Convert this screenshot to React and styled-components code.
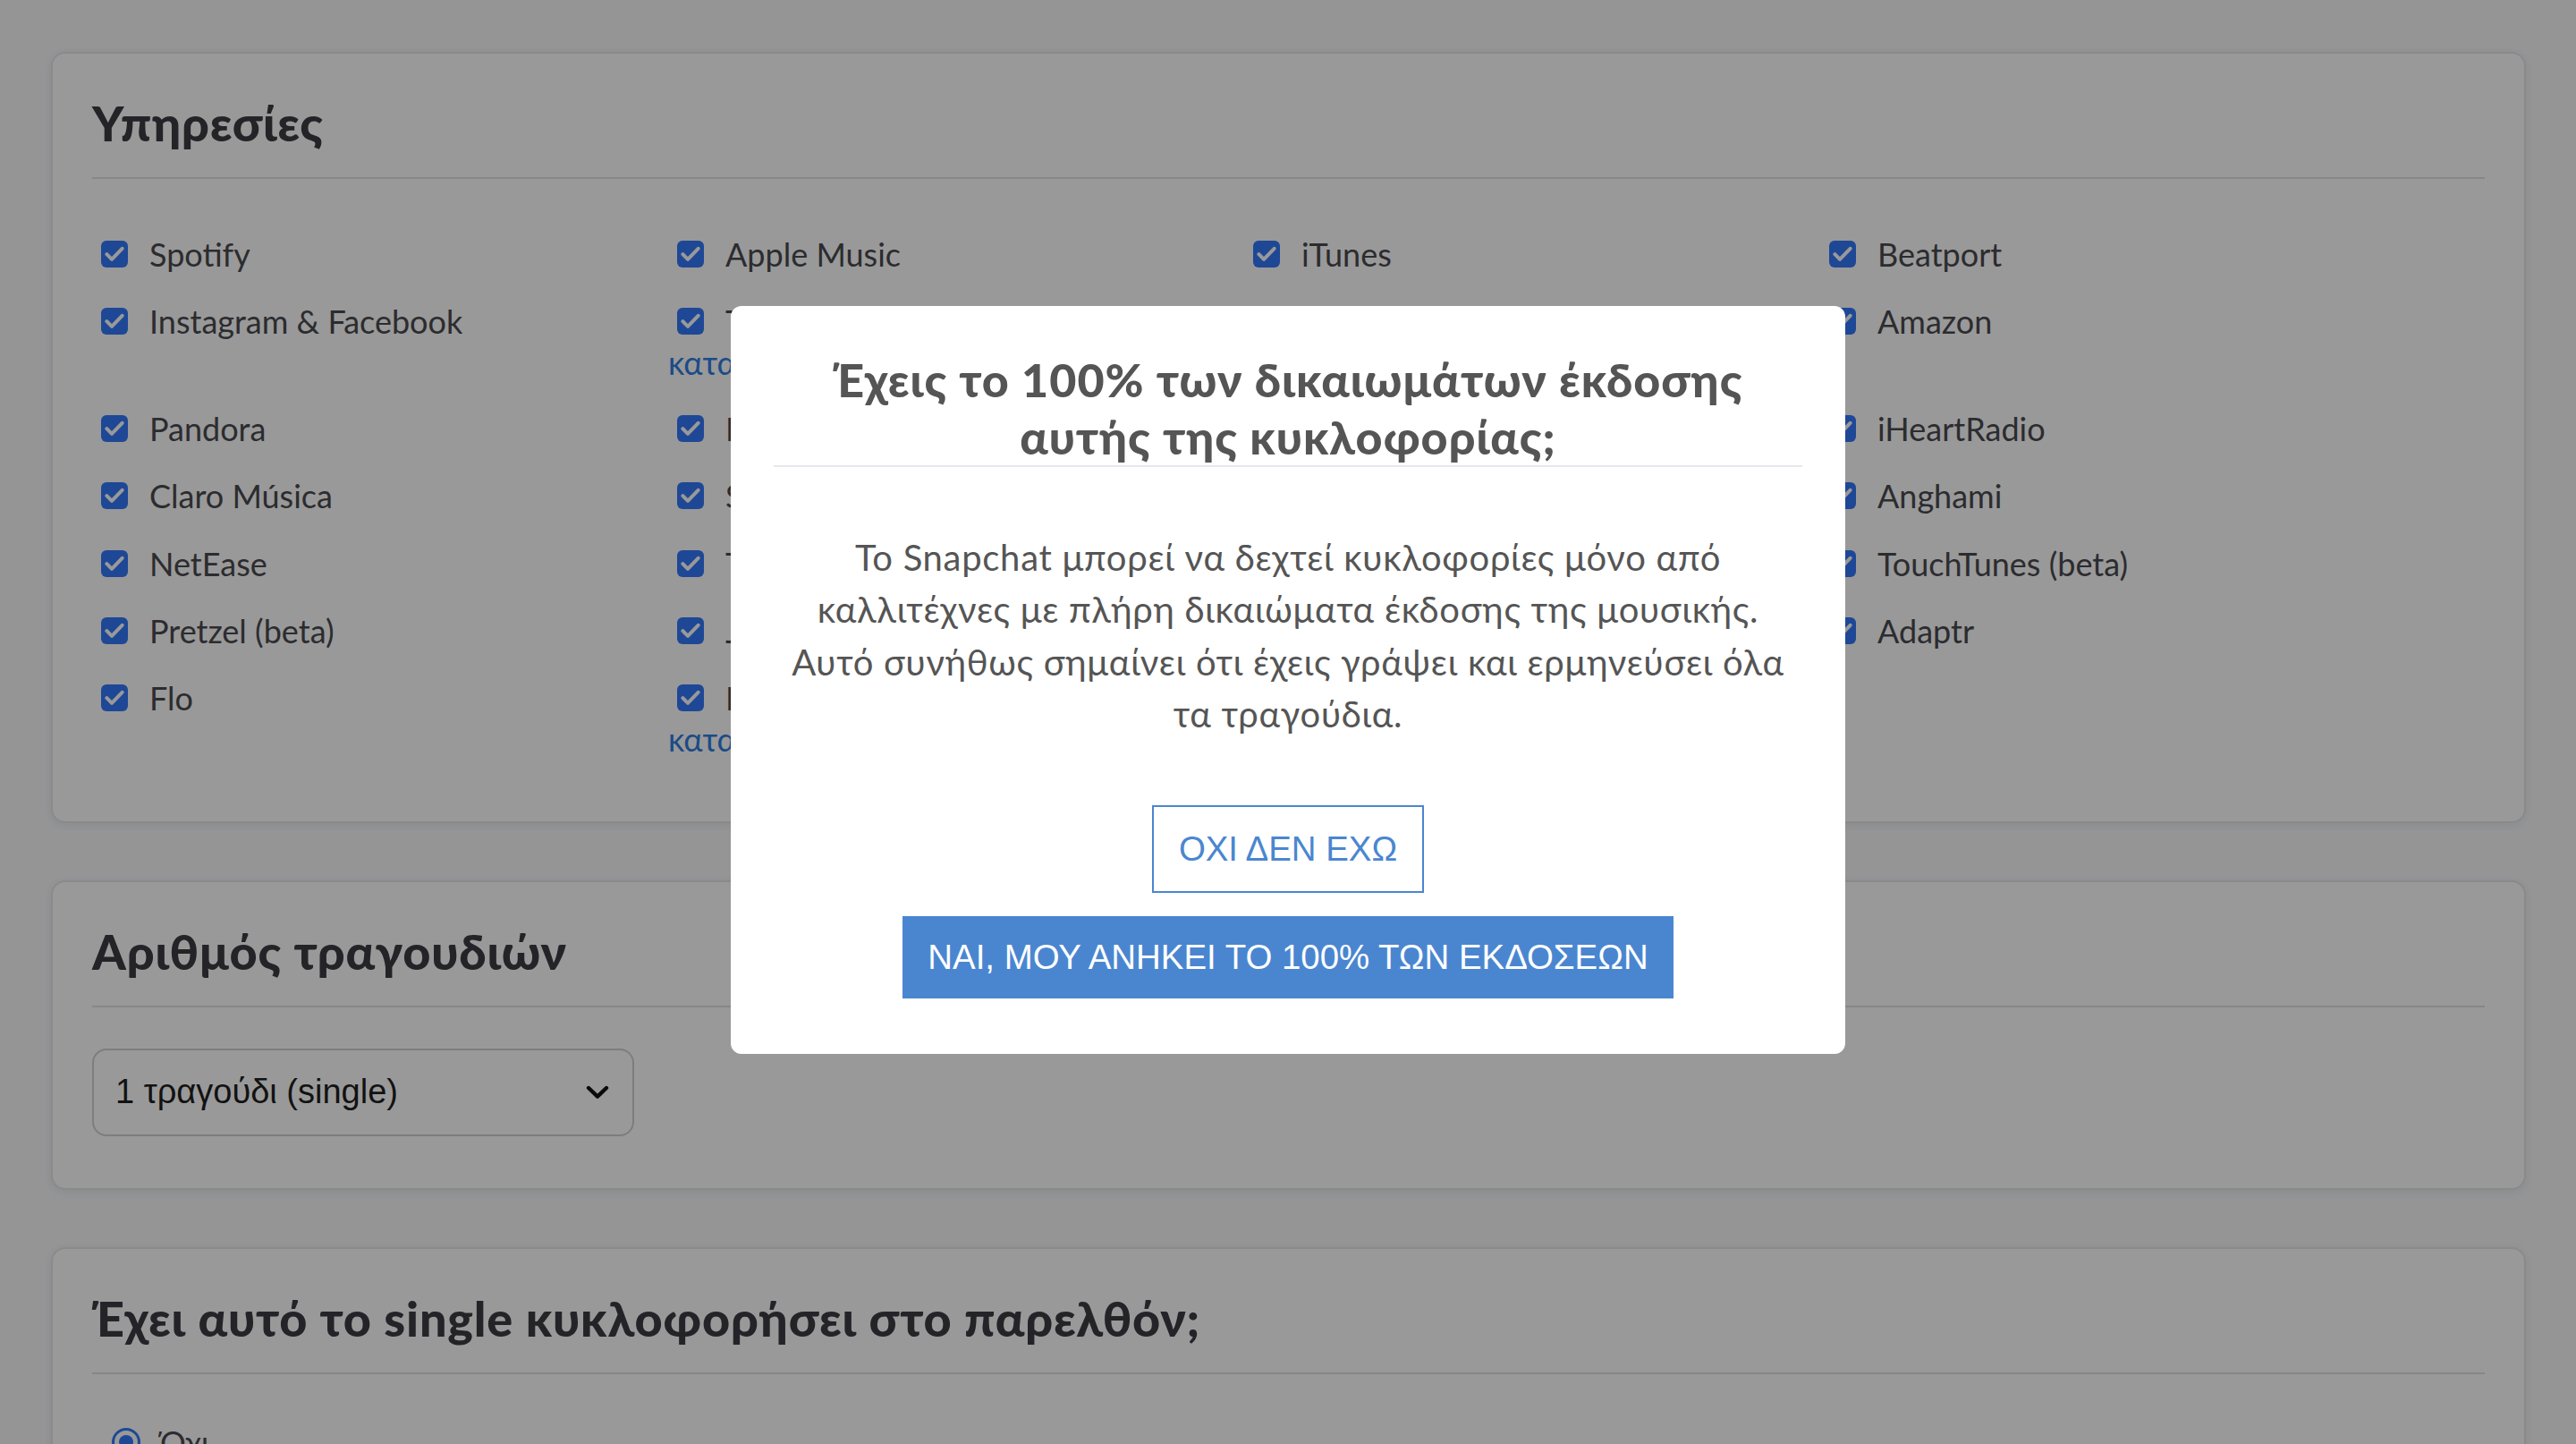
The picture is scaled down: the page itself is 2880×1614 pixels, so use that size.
import React from 'react'
import styled, { createGlobalStyle } from 'styled-components'

const GlobalStyle = createGlobalStyle`
  html {
    zoom: 2;
  }
  body {
    margin: 0;
    background: #f8f9fb;
    font-family: 'Lato', 'Noto Sans', sans-serif;
  }
`

const Page = styled.main`
  display: flex;
  flex-direction: column;
  gap: 32px;
  padding: 29px 28px 60px 28.5px;
`

const Card = styled.section`
  background: #ffffff;
  border: 1px solid #e6e6e6;
  border-radius: 8px;
  box-shadow: 0 1px 6px rgba(0, 0, 0, 0.08);
  padding: 23px 22px 21px;
`

const Heading = styled.h2`
  margin: 0 0 14px;
  font-family: 'Lato', 'Noto Sans', sans-serif;
  font-weight: 900;
  font-size: 27px;
  line-height: 32px;
  letter-spacing: 0.4px;
  color: #3c3c44;
`

const Divider = styled.hr`
  margin: 0;
  border: 0;
  border-top: 1px solid #e1e1e1;
`

const ServiceGrid = styled.div`
  display: grid;
  grid-template-columns: repeat(4, 322px);
  margin-top: 30px;
`

const ServiceItem = styled.div`
  padding-bottom: 13.7px;
`

const CheckRow = styled.label`
  display: flex;
  align-items: center;
  height: 24px;
`

const Box = styled.span`
  display: flex;
  align-items: center;
  justify-content: center;
  flex: none;
  width: 15px;
  height: 15px;
  margin: 0 12px 0 5px;
  border-radius: 3px;
  background: #3279fb;
`

const Label = styled.span`
  font-size: 18px;
  line-height: 24px;
  color: #4a4a4f;
  white-space: nowrap;
`

const Extra = styled.a`
  display: block;
  font-size: 18px;
  line-height: 22px;
  color: #2f7de1;
  text-decoration: none;
  white-space: nowrap;
`

const SelectBox = styled.div`
  display: flex;
  align-items: center;
  justify-content: space-between;
  box-sizing: border-box;
  width: 303px;
  height: 49px;
  margin: 23px 0 8px;
  padding: 0 13px 0 12px;
  border: 1px solid #d0d0d0;
  border-radius: 8px;
  background: #ffffff;
  font-family: 'Liberation Sans', Arial, sans-serif;
  font-size: 19px;
  color: #1f1f1f;
`

const RadioRow = styled.label`
  display: flex;
  align-items: center;
  height: 24px;
  margin-top: 26px;
`

const Radio = styled.span`
  display: flex;
  align-items: center;
  justify-content: center;
  box-sizing: border-box;
  width: 16px;
  height: 16px;
  margin: 0 11px 0 11px;
  border: 1.5px solid #3279fb;
  border-radius: 50%;

  &::after {
    content: '';
    width: 8px;
    height: 8px;
    border-radius: 50%;
    background: #3279fb;
  }
`

const Overlay = styled.div`
  position: fixed;
  inset: 0;
  display: flex;
  justify-content: center;
  align-items: flex-start;
  padding-top: 171px;
  background: rgba(0, 0, 0, 0.4);
`

const Dialog = styled.div`
  display: flex;
  flex-direction: column;
  align-items: center;
  box-sizing: border-box;
  width: 623px;
  padding: 25px 24px 31px;
  border-radius: 6px;
  background: #ffffff;
`

const DialogTitle = styled.h3`
  width: 100%;
  margin: 0;
  border-bottom: 1px solid #e6e6ec;
  font-weight: 900;
  font-size: 26px;
  line-height: 32px;
  letter-spacing: 0.5px;
  text-align: center;
  color: #555555;
`

const DialogText = styled.p`
  margin: 36px 0;
  font-size: 20px;
  line-height: 29.2px;
  letter-spacing: 0.35px;
  text-align: center;
  color: #555555;
`

const Button = styled.button`
  box-sizing: border-box;
  height: ${(p) => (p.$primary ? '46px' : '49px')};
  margin-bottom: ${(p) => (p.$primary ? '0' : '13px')};
  padding: 0 ${(p) => (p.$primary ? '13px' : '14px')};
  border: 1px solid #4a86d0;
  border-radius: 0;
  background: ${(p) => (p.$primary ? '#4a86d0' : '#ffffff')};
  color: ${(p) => (p.$primary ? '#ffffff' : '#4a86d0')};
  font-family: 'Liberation Sans', Arial, sans-serif;
  font-size: 19.2px;
  cursor: pointer;
`

const services = [
  { name: 'Spotify' },
  { name: 'Apple Music' },
  { name: 'iTunes' },
  { name: 'Beatport' },
  { name: 'Instagram & Facebook' },
  { name: 'TikTok', extra: 'καταχώρηση ήχων' },
  { name: 'YouTube Music' },
  { name: 'Amazon' },
  { name: 'Pandora' },
  { name: 'Deezer' },
  { name: 'Tencent' },
  { name: 'iHeartRadio' },
  { name: 'Claro Música' },
  { name: 'Snapchat' },
  { name: 'KKBox' },
  { name: 'Anghami' },
  { name: 'NetEase' },
  { name: 'Tidal' },
  { name: 'Boomplay' },
  { name: 'TouchTunes (beta)' },
  { name: 'Pretzel (beta)' },
  { name: 'JOOX' },
  { name: 'Audiomack' },
  { name: 'Adaptr' },
  { name: 'Flo' },
  { name: 'Napster', extra: 'καταχώρηση καλλιτεχνών' },
  { name: 'Qobuz' },
  null,
]

const Check = () => (
  <svg width="11" height="9" viewBox="0 0 11 9">
    <path d="M1.2 4.6 L4 7.4 L9.8 1.4" fill="none" stroke="#ffffff" strokeWidth="2" strokeLinecap="round" strokeLinejoin="round" />
  </svg>
)

const Chevron = () => (
  <svg width="13" height="8" viewBox="0 0 13 8">
    <path d="M1.5 1.5 L6.5 6.3 L11.5 1.5" fill="none" stroke="#111111" strokeWidth="2.2" strokeLinecap="round" strokeLinejoin="round" />
  </svg>
)

const App = () => (
  <>
    <GlobalStyle />
    <Page>
      <Card>
        <Heading>Υπηρεσίες</Heading>
        <Divider />
        <ServiceGrid>
          {services.map((s, i) =>
            s ? (
              <ServiceItem key={s.name}>
                <CheckRow>
                  <Box>
                    <Check />
                  </Box>
                  <Label>{s.name}</Label>
                </CheckRow>
                {s.extra && <Extra href="#">{s.extra}</Extra>}
              </ServiceItem>
            ) : (
              <ServiceItem key={`empty-${i}`} />
            )
          )}
        </ServiceGrid>
      </Card>

      <Card>
        <Heading>Αριθμός τραγουδιών</Heading>
        <Divider />
        <SelectBox>
          <span>1 τραγούδι (single)</span>
          <Chevron />
        </SelectBox>
      </Card>

      <Card>
        <Heading>Έχει αυτό το single κυκλοφορήσει στο παρελθόν;</Heading>
        <Divider />
        <RadioRow>
          <Radio />
          <Label>Όχι</Label>
        </RadioRow>
        <RadioRow>
          <Radio />
          <Label>Ναι</Label>
        </RadioRow>
      </Card>
    </Page>

    <Overlay>
      <Dialog>
        <DialogTitle>Έχεις το 100% των δικαιωμάτων έκδοσης αυτής της κυκλοφορίας;</DialogTitle>
        <DialogText>
          Το Snapchat μπορεί να δεχτεί κυκλοφορίες μόνο από καλλιτέχνες με πλήρη δικαιώματα έκδοσης της
          μουσικής. Αυτό συνήθως σημαίνει ότι έχεις γράψει και ερμηνεύσει όλα τα τραγούδια.
        </DialogText>
        <Button type="button">ΟΧΙ ΔΕΝ ΕΧΩ</Button>
        <Button type="button" $primary>
          ΝΑΙ, ΜΟΥ ΑΝΗΚΕΙ ΤΟ 100% ΤΩΝ ΕΚΔΟΣΕΩΝ
        </Button>
      </Dialog>
    </Overlay>
  </>
)

export default App
